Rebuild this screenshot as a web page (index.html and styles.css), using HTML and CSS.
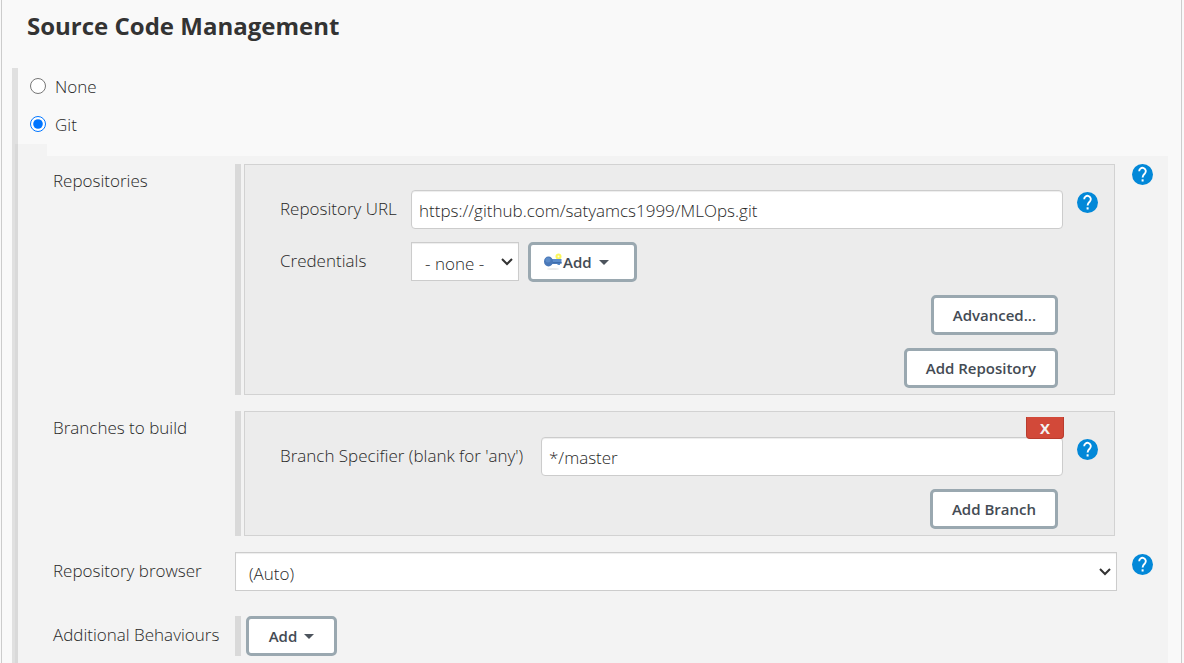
FILE: index.html
```html
<!DOCTYPE html>
<html lang="en">
<head>
  <meta charset="UTF-8">
  <meta name="viewport" content="width=device-width, initial-scale=1.0">
  <title>Source Code Management</title>
  <link rel="stylesheet" href="styles.css">
</head>
<body>
  <svg class="sprite" aria-hidden="true">
    <symbol id="help" viewBox="0 0 21 21">
      <circle cx="10.5" cy="10.5" r="10.5" fill="#0288d8"/>
      <path d="M7.200 7.200a3.300 3.300 0 1 1 5.700 2.200c-1.300 1.200-2.300 1.900-2.300 4.200" fill="none" stroke="#fff" stroke-width="1.900"/>
      <rect x="9.600" y="15.300" width="2" height="2.200" fill="#fff"/>
    </symbol>
  </svg>

  <form class="panel">
    <h2>Source Code Management</h2>

    <div class="scm">
      <label class="radio"><input type="radio" name="scm"> <span>None</span></label>
      <label class="radio"><input type="radio" name="scm" checked> <span>Git</span></label>

      <div class="git-tab"></div>
      <div class="git">
        <!-- Repositories -->
        <div class="row">
          <div class="label">Repositories</div>
          <div class="chunk">
            <div class="box">
              <div class="field">
                <label for="url">Repository URL</label>
                <input type="text" id="url" value="https://github.com/satyamcs1999/MLOps.git">
                <a href="#" class="help" aria-label="Help"><svg><use href="#help"/></svg></a>
              </div>
              <div class="field">
                <label for="credentials">Credentials</label>
                <div class="credentials">
                  <select id="credentials"><option>- none -</option></select>
                  <button type="button" class="btn btn-key">
                    <svg class="key" viewBox="0 0 18 18">
                      <ellipse cx="9" cy="16" rx="6" ry="1" fill="#ebebeb"/>
                      <circle cx="14.500" cy="3.500" r="3" fill="#fbf75c"/>
                      <circle cx="14.500" cy="3.500" r="1" fill="#fffde0"/>
                      <path d="M8 6h9.500v4.500h-1.500v1.500h-2.500v-1H8z" fill="#5b8ccb"/>
                      <path d="M8 9h9.500v1.500H8z" fill="#3f6dab"/>
                      <ellipse cx="4.500" cy="8.500" rx="4.500" ry="5" fill="#4a78b8"/>
                      <ellipse cx="4" cy="7" rx="2.500" ry="2.500" fill="#5c8bc8"/>
                    </svg>Add<span class="caret"></span>
                  </button>
                </div>
              </div>
              <div class="actions"><button type="button" class="btn">Advanced...</button></div>
              <div class="actions"><button type="button" class="btn">Add Repository</button></div>
            </div>
          </div>
          <a href="#" class="help" aria-label="Help"><svg><use href="#help"/></svg></a>
        </div>

        <!-- Branches -->
        <div class="row">
          <div class="label">Branches to build</div>
          <div class="chunk">
            <div class="box">
              <button type="button" class="delete">X</button>
              <div class="field field-wide">
                <label for="branch">Branch Specifier (blank for 'any')</label>
                <input type="text" id="branch" value="*/master">
                <a href="#" class="help" aria-label="Help"><svg><use href="#help"/></svg></a>
              </div>
              <div class="actions"><button type="button" class="btn">Add Branch</button></div>
            </div>
          </div>
        </div>

        <div class="row row-browser">
          <label class="label" for="browser">Repository browser</label>
          <select id="browser"><option>(Auto)</option></select>
          <a href="#" class="help" aria-label="Help"><svg><use href="#help"/></svg></a>
        </div>

        <div class="row row-behaviours">
          <div class="label">Additional Behaviours</div>
          <div class="chunk">
            <button type="button" class="btn btn-add">Add<span class="caret"></span></button>
          </div>
        </div>
      </div>
    </div>
  </form>
</body>
</html>
```
FILE: styles.css
```css
* {
  box-sizing: border-box;
}
body {
  margin: 0;
  background: #f9f9f9;
  color: #282828;
  font-family: "Segoe UI", "Open Sans", "Noto Sans", sans-serif;
  font-size: 17px;
  font-weight: 350;
  line-height: 24px;
}
.sprite {
  display: none;
}
.panel {
  display: flex;
  flex-direction: column;
  min-height: 100vh;
  margin: 0 2px 0 1px;
  padding: 8px 13px 0 10px;
  border: solid #ccc;
  border-width: 0 1px;
}
h2 {
  margin: 0 0 24px 15px;
  color: #333;
  font-size: 24px;
  font-weight: 700;
  line-height: 36px;
}

/* radio list with the bar on its left */
.scm {
  flex: 1;
  display: flex;
  flex-direction: column;
  border-left: 6px solid #e0e0e0;
}
.radio {
  display: flex;
  align-items: center;
  gap: 9px;
  height: 38px;
  padding-left: 12px;
}
.radio input {
  width: 16px;
  height: 16px;
  margin: 0 0 2px;
}
.git-tab {
  width: 32px;
  height: 12px;
  margin-left: -3px;
  border-left: 3px solid #d9d9d9;
  background: #f3f3f3;
}
.git {
  flex: 1;
  display: flex;
  flex-direction: column;
  gap: 16px;
  margin-left: -3px;
  padding: 8px 0 7px 35px;
  border-left: 3px solid #d9d9d9;
  background: #f3f3f3;
}
.row {
  display: grid;
  grid-template-columns: 182px 1fr 51px;
}
.row .label {
  padding-top: 5px;
}
.chunk {
  padding-left: 3px;
  border-left: 6px solid #d9d9d9;
  margin-right: 2px;
}
.row-browser .label,
.row-behaviours .label {
  padding-top: 7px;
}
.row-behaviours {
  margin-top: 9px;
}

.box {
  position: relative;
  display: flex;
  flex-direction: column;
  gap: 13px;
  padding: 25px 16px 6px 35px;
  border: 1px solid #d2d2d2;
  background: #ececec;
}
.field {
  display: grid;
  grid-template-columns: 131px 1fr 35px;
}
.field-wide {
  grid-template-columns: 261px 1fr 35px;
}
.field label {
  padding-top: 7px;
}
.credentials {
  display: flex;
  gap: 9px;
}
.actions {
  display: flex;
  justify-content: flex-end;
  padding-right: 40px;
}

input[type="text"],
select {
  width: 100%;
  min-width: 0;
  border: 1px solid #ccc;
  background-color: #fff;
  box-shadow: inset 0 1px 1px rgba(0, 0, 0, 0.075);
  color: #282828;
  font: inherit;
}
input[type="text"] {
  height: 39px;
  padding: 1px 7px 0;
  border-radius: 4px;
}
select {
  appearance: none;
  height: 39px;
  padding: 5px 20px 0 13px;
  border-radius: 0;
  background-image: url("data:image/svg+xml,%3Csvg xmlns='http://www.w3.org/2000/svg' width='12' height='8'%3E%3Cpath d='M1 1l5 5 5-5' fill='none' stroke='%23333' stroke-width='2'/%3E%3C/svg%3E");
  background-repeat: no-repeat;
  background-position: right 5px center;
}
.credentials select {
  width: 108px;
}

.btn {
  height: 40px;
  padding: 0 19px;
  border: 3px solid #9aa8b0;
  border-radius: 5px;
  background: #fff;
  color: #444b54;
  font-family: inherit;
  font-size: 15px;
  font-weight: 650;
  white-space: nowrap;
}
.btn-key {
  display: flex;
  align-items: center;
  width: 109px;
  padding: 0 13px;
}
.btn-add {
  display: block;
  width: 91px;
  margin-left: 2px;
}
.key {
  width: 18px;
  height: 18px;
  margin-right: 1px;
}
.caret {
  display: inline-block;
  margin-left: 7px;
  border: solid transparent;
  border-width: 5px 5px 0;
  border-top-color: #4d545d;
  vertical-align: 3px;
}
.delete {
  position: absolute;
  top: 5px;
  right: 50px;
  width: 38px;
  height: 22px;
  padding: 0;
  border: 1px solid #b93c2e;
  border-top: 0;
  border-radius: 0 0 4px 4px;
  background: #d24939;
  color: #f2f2f2;
  font-family: inherit;
  font-size: 15px;
  font-weight: 700;
  line-height: 20px;
}
.help {
  width: 21px;
  height: 21px;
  margin-left: 15px;
}
.field .help {
  margin: 2px 0 0 14px;
}
.row-browser .help {
  margin-top: 2px;
}
.help svg {
  display: block;
  width: 21px;
  height: 21px;
}
```
